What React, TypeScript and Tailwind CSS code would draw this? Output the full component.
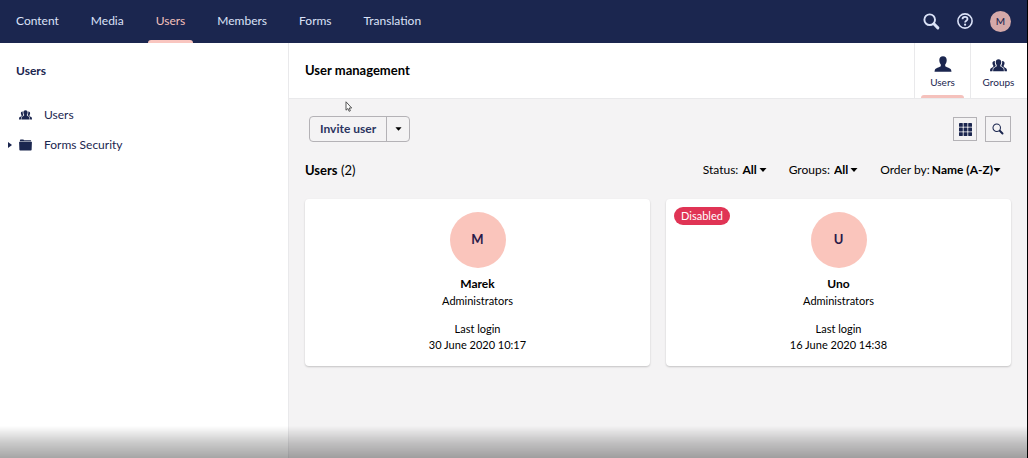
import type { ReactNode } from "react";

const sections = ["Content", "Media", "Users", "Members", "Forms", "Translation"];

const users = [
  { name: "Marek", group: "Administrators", login: "30 June 2020 10:17", disabled: false },
  { name: "Uno", group: "Administrators", login: "16 June 2020 14:38", disabled: true },
];

function GroupIcon({ className }: { className: string }) {
  return (
    <svg viewBox="0 0 16 12" fill="currentColor" className={className} aria-hidden="true">
      <path d="M8 .2c1.600 0 2.600 1.100 2.600 2.700 0 1-.3 2-.9 2.600v1.200c.2.700 2.800 1.100 3.100 2.400l.3 2.300H2.900l.3-2.300c.3-1.300 2.900-1.700 3.100-2.400V5.500c-.6-.6-.9-1.600-.9-2.600C5.400 1.300 6.400.2 8 .2z" />
      <path d="M4.600 1.700c-1.400-.2-2.300.7-2.300 2.100 0 .9.300 1.600.8 2.100v1.100c0 .9-2.500 1.200-2.900 2.500L0 11.400h2.300l.3-2.600c.3-1.200 1.800-1.700 2.700-2.200V5.800C4.700 5 4.400 3 4.600 1.700zM11.400 1.700c1.400-.2 2.300.7 2.300 2.100 0 .9-.3 1.600-.8 2.100v1.100c0 .9 2.500 1.200 2.900 2.500l.2 1.900h-2.300l-.3-2.600c-.3-1.200-1.800-1.700-2.700-2.200V5.800c.6-.8.9-2.800.7-4.100z" />
    </svg>
  );
}

function UserIcon({ className }: { className: string }) {
  return (
    <svg viewBox="0 0 18 16" fill="currentColor" className={className} aria-hidden="true">
      <path d="M9 .3c2.300 0 3.700 1.500 3.700 3.800 0 1.700-.5 3.300-1.500 4.300v1.700c.4 1.300 5 1.600 5.900 3.700l.4 2H.5l.4-2c.9-2.100 5.500-2.400 5.900-3.700V8.400c-1-1-1.500-2.600-1.500-4.300C5.300 1.800 6.700.3 9 .3z" />
    </svg>
  );
}

function FolderIcon({ className }: { className: string }) {
  return (
    <svg viewBox="0 0 14 12" fill="currentColor" className={className} aria-hidden="true">
      <path d="M1 2V1c0-.5.300-.8.800-.8h2.700c.5 0 .8.300.8.800h7.200c.4 0 .6.300.6.600V2zM.6 2.600h12.800c.3 0 .5.200.5.500l-.3 7.900c0 .5-.3.800-.8.800H1.200c-.5 0-.8-.3-.8-.8L.1 3.100c0-.3.200-.5.500-.5z" />
    </svg>
  );
}

function SearchIcon({ className, bold }: { className: string; bold?: boolean }) {
  return (
    <svg viewBox="0 0 16 16" fill="none" stroke="currentColor" strokeLinecap="round" className={className} aria-hidden="true">
      <circle cx="6.300" cy="6.300" r="5" strokeWidth={bold ? 1.8 : 1.4} />
      <path d="M10.400 10.400 14 14" strokeWidth={bold ? 2.8 : 2.6} />
    </svg>
  );
}

function HelpIcon({ className }: { className: string }) {
  return (
    <svg viewBox="0 0 16 16" fill="none" stroke="currentColor" className={className} aria-hidden="true">
      <circle cx="8" cy="8" r="7.100" strokeWidth="1.600" />
      <path d="M5.500 6.200c0-1.500 1.100-2.400 2.500-2.400s2.500.9 2.500 2.200c0 1.800-2.400 1.800-2.400 3.600" strokeWidth="1.800" />
      <circle cx="8.100" cy="11.700" r="1.100" fill="currentColor" stroke="none" />
    </svg>
  );
}

function GridIcon({ className }: { className: string }) {
  return (
    <svg viewBox="0 0 13 13" fill="currentColor" className={className} aria-hidden="true">
      {[0, 4.6, 9.2].map((y) =>
        [0, 4.6, 9.2].map((x) => <rect key={`${x}-${y}`} x={x} y={y} width="3.800" height="3.800" rx="0.400" />),
      )}
    </svg>
  );
}

function Caret({ className }: { className: string }) {
  return (
    <svg viewBox="0 0 8 4" fill="currentColor" className={className} aria-hidden="true">
      <path d="M0.500 0h7L4 4z" />
    </svg>
  );
}

function Pointer({ className }: { className: string }) {
  return (
    <svg viewBox="0 0 8 11" fill="#fff" stroke="#444" strokeWidth="0.900" className={className} aria-hidden="true">
      <path d="M1 .8v8.400l1.900-1.700 1.200 2.800 1.300-.6-1.200-2.700h2.500z" />
    </svg>
  );
}

function Filter({ id, label, options, tight }: { id: string; label: string; options: string[]; tight?: boolean }) {
  return (
    <div className="flex items-center text-xs">
      <label htmlFor={id} className={tight ? "mr-0.5" : "mr-1"}>{label}</label>
      <select id={id} className={`field-sizing-content appearance-none bg-transparent font-bold ${tight ? "pr-2" : "pr-2.5"}`}>
        {options.map((o) => <option key={o}>{o}</option>)}
      </select>
      <Caret className="pointer-events-none -ml-2 h-1 w-2" />
    </div>
  );
}

function Tab({ label, active, children }: { label: string; active?: boolean; children: ReactNode }) {
  return (
    <button type="button" className="relative flex w-14 flex-col items-center justify-end border-l border-[#e9e9eb] pb-2 text-[10px] leading-4 text-[#1b264f]">
      {children}
      {label}
      {active && <span className="absolute inset-x-1.5 bottom-0 h-[3px] rounded-t-sm bg-[#f5c1bc]" />}
    </button>
  );
}

export default function App() {
  return (
    <div className="flex min-h-screen flex-col border-r border-black bg-white font-['Lato',sans-serif] text-[13px] leading-5 text-black">
      <header className="flex h-[43px] items-center justify-between bg-[#1b264f] pr-4 pl-1.5 text-[#dbe2f8]">
        <nav className="flex h-full gap-3 text-xs">
          {sections.map((s) => (
            <a key={s} href="#" className={`relative flex items-center px-2.5 pb-0.5 ${s === "Users" ? "text-[#f5c1bc]" : ""}`}>
              {s}
              {s === "Users" && <span className="absolute inset-x-0.5 bottom-0 h-[3px] rounded-t-sm bg-[#f9c6c0]" />}
            </a>
          ))}
        </nav>
        <div className="flex items-center gap-[17px] pb-px">
          <button type="button" aria-label="Search"><SearchIcon bold className="size-[17px]" /></button>
          <button type="button" aria-label="Help"><HelpIcon className="size-4" /></button>
          <button type="button" className="flex size-[21px] items-center justify-center rounded-full bg-[#d5a9a9] text-[10px] font-medium text-[#1b264f]">M</button>
        </div>
      </header>

      <div className="flex flex-1">
        <aside className="w-[289px] shrink-0 border-r border-[#e9e9eb] text-xs leading-5 text-[#1b264f]">
          <h2 className="px-4 pt-[18px] font-bold">Users</h2>
          <ul className="flex flex-col gap-2.5 pt-6">
            <li>
              <a href="#" className="flex items-center pl-[19px]">
                <GroupIcon className="mr-3 h-2.5 w-[13px]" />Users
              </a>
            </li>
            <li className="flex items-center">
              <button type="button" aria-label="Expand Forms Security" className="flex w-[19px] justify-center">
                <svg viewBox="0 0 4 6" fill="currentColor" className="h-1.5 w-1" aria-hidden="true"><path d="M0 0v6l4-3z" /></svg>
              </button>
              <a href="#" className="flex items-center">
                <FolderIcon className="mr-3 h-3 w-[13px]" />Forms Security
              </a>
            </li>
          </ul>
        </aside>

        <main className="relative min-w-0 flex-1 bg-[#f4f3f4]">
          <div className="flex h-14 border-b border-[#e9e9eb] bg-white pr-px">
            <h1 className="flex flex-1 items-center pb-0.5 pl-4 font-bold">User management</h1>
            <Tab label="Users" active><UserIcon className="mb-0.5 h-4 w-[18px]" /></Tab>
            <Tab label="Groups"><GroupIcon className="mb-0.5 h-[13px] w-[17px]" /></Tab>
          </div>
          <Pointer className="absolute top-[58px] left-14 h-[11px] w-2" />

          <div className="px-4 pt-[17px] pb-10">
            <div className="flex items-center justify-between">
              <div className="ml-1 flex h-[26px] rounded-sm border border-[#b4b2b6]">
                <button type="button" className="px-2.5 text-xs font-bold text-[#2b3461]">Invite user</button>
                <button type="button" aria-label="More actions" className="flex w-[23px] items-center justify-center border-l border-[#b4b2b6]">
                  <Caret className="h-1 w-[7px]" />
                </button>
              </div>
              <div className="flex items-center gap-2 text-[#1b264f]">
                <button type="button" aria-label="Grid view" className="flex size-6 items-center justify-center border border-[#b4b2b6]"><GridIcon className="size-[13px]" /></button>
                <button type="button" aria-label="Search users" className="flex size-[26px] items-center justify-center border border-[#b4b2b6]"><SearchIcon className="size-3" /></button>
              </div>
            </div>

            <div className="mt-[18px] flex items-center justify-between">
              <h2><b>Users</b> (2)</h2>
              <div className="flex gap-[22px] pr-2.5">
                <Filter id="status" label="Status:" options={["All"]} />
                <Filter id="groups" label="Groups:" options={["All"]} />
                <Filter id="order" label="Order by:" options={["Name (A-Z)"]} tight />
              </div>
            </div>

            <div className="mt-[19px] grid grid-cols-2 gap-4">
              {users.map((u) => (
                <article key={u.name} className="relative flex flex-col items-center rounded-sm bg-white pt-[13px] pb-[13px] text-[11px] leading-4 shadow-[0_1px_2px_rgba(0,0,0,0.2)]">
                  {u.disabled && <span className="absolute top-2 left-2 rounded-full bg-[#e03455] px-[7px] leading-[18px] text-white">Disabled</span>}
                  <div className="flex size-14 items-center justify-center rounded-full bg-[#fac5bc] pb-0.5 text-[13px] font-bold text-[#2a1a4a]">{u.name[0]}</div>
                  <h3 className="mt-2 text-xs font-bold">{u.name}</h3>
                  <p className="mt-px">{u.group}</p>
                  <p className="mt-3">Last login</p>
                  <p>{u.login}</p>
                </article>
              ))}
            </div>
          </div>
        </main>
      </div>
      <div className="pointer-events-none fixed inset-x-0 bottom-0 h-8 bg-linear-to-b from-transparent via-black/20 to-black/35" />
    </div>
  );
}
